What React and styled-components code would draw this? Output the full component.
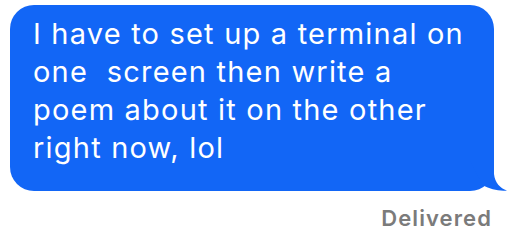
import React from "react";
import styled, { createGlobalStyle } from "styled-components";

const GlobalStyle = createGlobalStyle`
  html, body {
    margin: 0;
    padding: 0;
    background: #ffffff;
  }
  body {
    font-family: Inter, "Liberation Sans", Arial, sans-serif;
  }
`;

const Thread = styled.div`
  display: flex;
  flex-direction: column;
  align-items: flex-end;
  width: 484px;
  padding: 5px 0 0 10px;
`;

const Bubble = styled.div`
  position: relative;
  width: 100%;
  box-sizing: border-box;
  padding: 10px 16px 24px 23px;
  background: #1266f6;
  border-radius: 24px;
  color: #ffffff;
  font-size: 29px;
  line-height: 38px;
  letter-spacing: 1.2px;
  white-space: pre-wrap;
`;

const Tail = styled.svg`
  position: absolute;
  right: -16px;
  bottom: 0;
  width: 40px;
  height: 30px;
`;

const Status = styled.div`
  margin-top: 14px;
  margin-right: 2px;
  color: #7b7b7b;
  font-size: 22px;
  font-weight: 600;
  line-height: 26px;
  letter-spacing: 1.1px;
`;

const lines = [
  "I have to set up a terminal on",
  "one  screen then write a",
  "poem about it on the other",
  "right now, lol",
];

export default function App() {
  return (
    <>
      <GlobalStyle />
      <Thread>
        <Bubble>
          {lines.join("\n")}
          <Tail viewBox="0 0 40 30">
            <path
              d="M24 0 L24 13 C25 22 30 27 37 29.5 C29 30.5 20 28 13 24.5 L0 0 Z"
              fill="#1266f6"
            />
          </Tail>
        </Bubble>
        <Status>Delivered</Status>
      </Thread>
    </>
  );
}
